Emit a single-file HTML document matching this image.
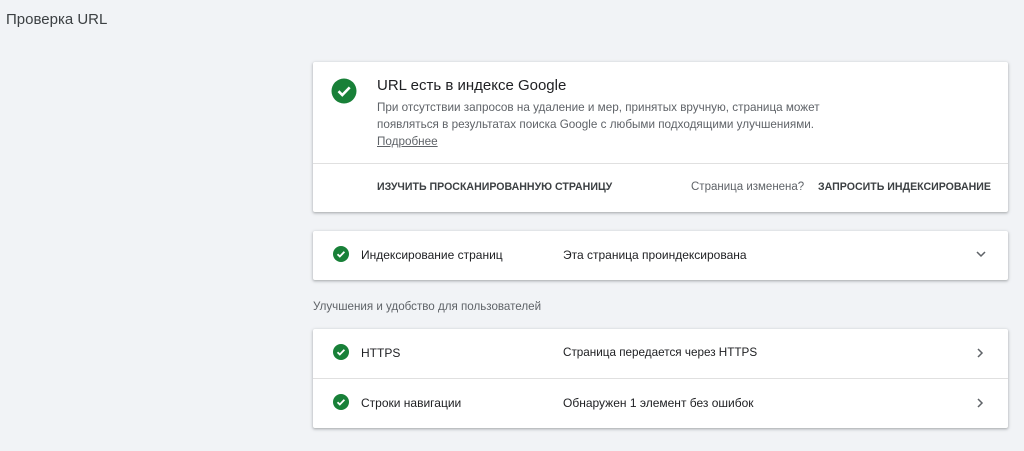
<!DOCTYPE html>
<html><head><meta charset="utf-8"><style>
body{margin:0;width:1024px;height:451px;background:#f1f3f6;font-family:"Liberation Sans",sans-serif;color:#202124;position:relative;overflow:hidden}
.a{position:absolute;white-space:nowrap}
.card{position:absolute;left:313px;width:695px;background:#fff;box-shadow:0 1px 2px rgba(60,64,67,.3),0 1px 3px 1px rgba(60,64,67,.12);border-radius:2px}
.ck{position:absolute}
.row{position:absolute;left:0;width:695px;height:49px}
.row .n{position:absolute;left:48px;top:17px;font-size:12px;color:#202124}
.row .v{position:absolute;left:250px;top:17px;font-size:12px;color:#202124}
.row .c{position:absolute;left:20px;top:15px}
</style></head><body>
<div class="a" style="left:6px;top:11px;font-size:15px;color:#3c4043">Проверка URL</div>

<div class="card" style="top:62px;height:150px">
 <svg class="ck" style="left:18px;top:16px" width="26" height="26" viewBox="0 0 26 26"><circle cx="13" cy="13" r="12.5" fill="#188038"/><path d="M7.5 13.2l3.8 3.8 7.4-7.6" stroke="#fff" stroke-width="2.6" fill="none"/></svg>
 <div class="a" style="left:64px;top:15px;font-size:15px;font-weight:500;color:#202124">URL есть в индексе Google</div>
 <div class="a" style="left:64px;top:37px;font-size:11.7px;line-height:17px;color:#5f6368">При отсутствии запросов на удаление и мер, принятых вручную, страница может<br>появляться в результатах поиска Google с любыми подходящими улучшениями.<br><span style="text-decoration:underline">Подробнее</span></div>
 <div style="position:absolute;left:0;top:101px;width:695px;height:1px;background:#e0e0e0"></div>
 <div class="a" style="left:64px;top:119px;font-size:10.6px;font-weight:bold;color:#3c4043">ИЗУЧИТЬ ПРОСКАНИРОВАННУЮ СТРАНИЦУ</div>
 <div class="a" style="left:378px;top:119px;font-size:11.5px;color:#5f6368">Страница изменена?</div>
 <div class="a" style="right:17px;top:119px;font-size:10.6px;font-weight:bold;color:#3c4043">ЗАПРОСИТЬ ИНДЕКСИРОВАНИЕ</div>
</div>

<div class="card" style="top:231px;height:49px">
 <div class="row" style="top:0">
  <svg class="c" width="16" height="16" viewBox="0 0 16 16"><circle cx="8" cy="8" r="8" fill="#188038"/><path d="M4.5 8.2l2.3 2.3 4.6-4.7" stroke="#fff" stroke-width="1.8" fill="none"/></svg>
  <div class="n">Индексирование страниц</div><div class="v">Эта страница проиндексирована</div>
  <svg style="position:absolute;right:22px;top:20px" width="10" height="7" viewBox="0 0 10 7"><path d="M1 1l4 4 4-4" stroke="#5f6368" stroke-width="1.5" fill="none"/></svg>
 </div>
</div>

<div class="a" style="left:313px;top:300px;font-size:11.6px;color:#5f6368">Улучшения и удобство для пользователей</div>

<div class="card" style="top:329px;height:99px">
 <div class="row" style="top:0;border-bottom:1px solid #e0e0e0">
  <svg class="c" width="16" height="16" viewBox="0 0 16 16"><circle cx="8" cy="8" r="8" fill="#188038"/><path d="M4.5 8.2l2.3 2.3 4.6-4.7" stroke="#fff" stroke-width="1.8" fill="none"/></svg>
  <div class="n">HTTPS</div><div class="v" style="font-size:11.7px">Страница передается через HTTPS</div>
  <svg style="position:absolute;right:24px;top:19px" width="7" height="10" viewBox="0 0 7 10"><path d="M1 1l4 4-4 4" stroke="#5f6368" stroke-width="1.5" fill="none"/></svg>
 </div>
 <div class="row" style="top:50px">
  <svg class="c" width="16" height="16" viewBox="0 0 16 16"><circle cx="8" cy="8" r="8" fill="#188038"/><path d="M4.5 8.2l2.3 2.3 4.6-4.7" stroke="#fff" stroke-width="1.8" fill="none"/></svg>
  <div class="n">Строки навигации</div><div class="v">Обнаружен 1 элемент без ошибок</div>
  <svg style="position:absolute;right:24px;top:19px" width="7" height="10" viewBox="0 0 7 10"><path d="M1 1l4 4-4 4" stroke="#5f6368" stroke-width="1.5" fill="none"/></svg>
 </div>
</div>
</body></html>
